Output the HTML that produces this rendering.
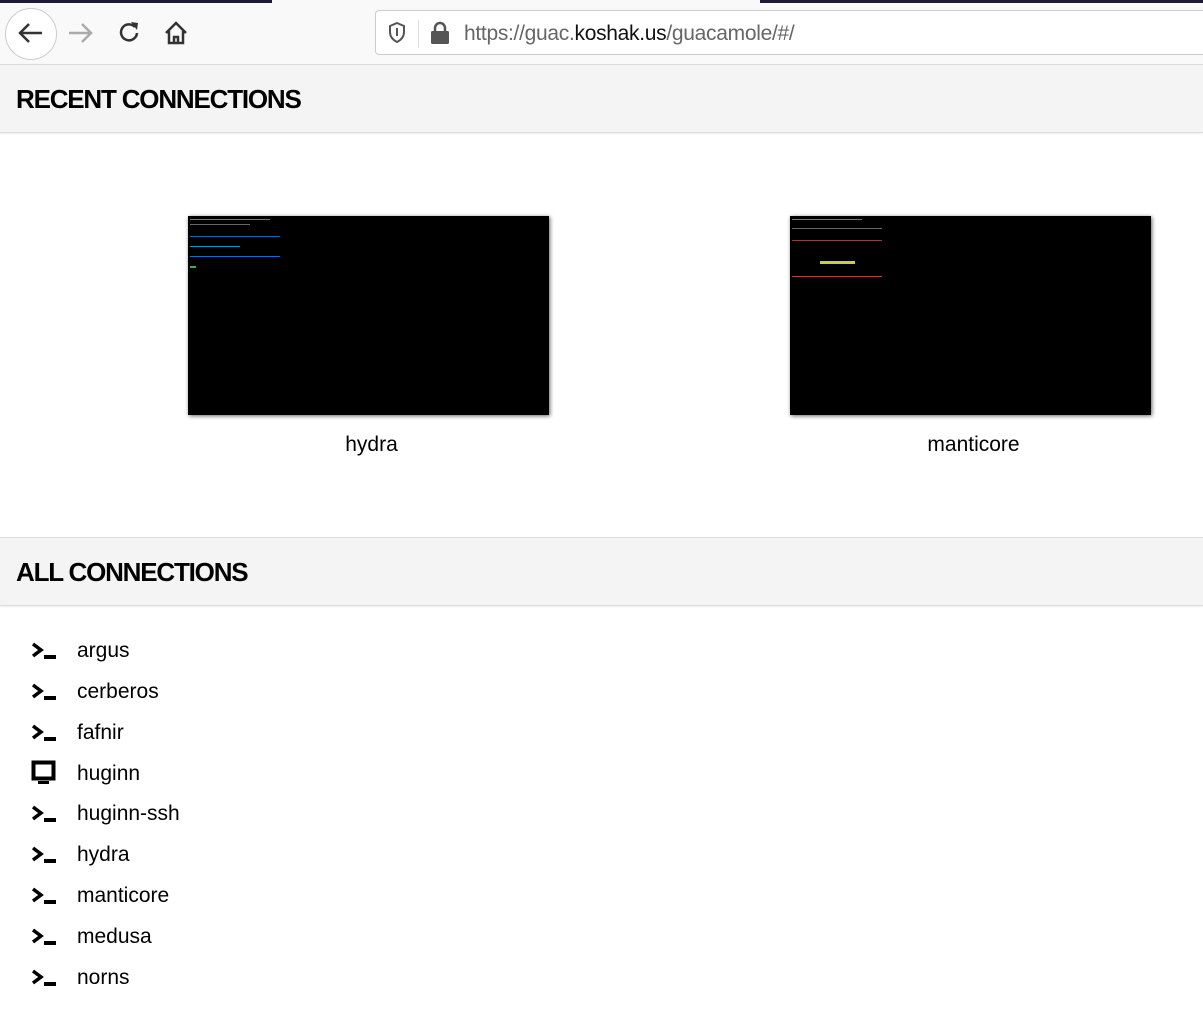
<!DOCTYPE html>
<html><head><meta charset="utf-8"><style>
body{margin:0;width:1203px;height:1031px;overflow:hidden;background:#fff;font-family:"Liberation Sans",sans-serif;position:relative}
.abs{position:absolute}
.hdr{position:absolute;left:0;width:1203px;height:67px;background:#f4f4f4;border-top:1px solid #ddd;border-bottom:1px solid #ddd;box-shadow:0 1px 2px rgba(0,0,0,.08)}
.hdr span{position:absolute;left:16px;top:19px;font-size:26px;font-weight:bold;letter-spacing:-1.2px;color:#000;white-space:nowrap}
.thumb{position:absolute;width:361px;height:199px;background:#000;box-shadow:1px 1px 4px rgba(0,0,0,.6)}
.lbl{position:absolute;font-size:21px;color:#000;text-align:center;width:361px}
.item{position:absolute;left:30px;height:30px;width:300px;font-size:21px;white-space:nowrap}
.item span{position:absolute;left:47px;top:2px}
</style></head><body>
<div class="abs" style="left:0;top:0;width:1203px;height:64px;background:#f9f9fa"></div>
<div class="abs" style="left:0;top:0;width:272px;height:3px;background:#1c1b33"></div>
<div class="abs" style="left:760px;top:0;width:443px;height:3px;background:#1c1b33"></div>
<div class="abs" style="left:5px;top:8px;width:50px;height:50px;border:1px solid #ccc;border-radius:50%;background:#fff"></div>
<svg class="abs" style="left:0;top:0" width="200" height="64">
<path d="M42 33H20M29 24l-9 9 9 9" stroke="#333" stroke-width="2.5" fill="none"/>
<path d="M91 33H69M82 24l9 9-9 9" stroke="#aaa" stroke-width="2.5" fill="none"/>
<path d="M135 27a8 8 0 1 0 2 6" stroke="#333" stroke-width="2.5" fill="none"/><path d="M131 22l7 1-1 7z" fill="#333"/>
<path d="M166 33l10-10 10 10M169 31v12h14V31M174 43v-6h4v6" stroke="#333" stroke-width="2.5" fill="none"/>
</svg>
<div class="abs" style="left:375px;top:10px;width:840px;height:43px;border:1px solid #ccc;border-radius:4px;background:#fff"></div>
<svg class="abs" style="left:380px;top:20px" width="80" height="28">
<path d="M17 3l7 3v6c0 5-3 8-7 10-4-2-7-5-7-10V6z" stroke="#555" stroke-width="2" fill="none"/><rect x="16" y="8" width="2" height="8" fill="#555"/>
<rect x="38" y="0" width="1" height="28" fill="#ddd"/>
<path d="M55 11V8a5 5 0 0 1 10 0v3" stroke="#555" stroke-width="2.5" fill="none"/><rect x="51" y="11" width="18" height="13" rx="1.5" fill="#555"/>
</svg>
<div class="abs" style="left:464px;top:22px;font-size:21px;color:#666;letter-spacing:-0.3px">https://guac.<span style="color:#111">koshak.us</span>/guacamole/#/</div>
<div class="hdr" style="top:64px"><span>RECENT CONNECTIONS</span></div>
<div class="thumb" style="left:188px;top:216px"></div>
<div class="thumb" style="left:790px;top:216px"></div>
<svg class="abs" style="left:188px;top:216px" width="100" height="60"><rect x="2" y="3" width="80" height="1" fill="#777"/><rect x="2" y="8" width="60" height="1" fill="#666"/><rect x="2" y="20" width="90" height="1" fill="#26a"/><rect x="2" y="30" width="50" height="1" fill="#28c"/><rect x="2" y="40" width="90" height="1" fill="#26c"/><rect x="2" y="50" width="6" height="2" fill="#4a4"/></svg>
<svg class="abs" style="left:790px;top:216px" width="100" height="70"><rect x="2" y="3" width="70" height="1" fill="#777"/><rect x="2" y="12" width="90" height="1" fill="#666"/><rect x="2" y="24" width="90" height="1" fill="#844"/><rect x="30" y="45" width="35" height="3" fill="#cc4"/><rect x="2" y="60" width="90" height="1" fill="#a44"/></svg>
<div class="lbl" style="left:191px;top:433px">hydra</div>
<div class="lbl" style="left:793px;top:433px">manticore</div>
<div class="hdr" style="top:537px"><span>ALL CONNECTIONS</span></div>
<div class="item" style="top:637px"><svg class="abs" style="left:0;top:4px" width="28" height="20"><path d="M3 3l8 6-8 6" stroke="#000" stroke-width="3.5" fill="none"/><rect x="14" y="14" width="12" height="4" fill="#000"/></svg><span>argus</span></div>
<div class="item" style="top:678px"><svg class="abs" style="left:0;top:4px" width="28" height="20"><path d="M3 3l8 6-8 6" stroke="#000" stroke-width="3.5" fill="none"/><rect x="14" y="14" width="12" height="4" fill="#000"/></svg><span>cerberos</span></div>
<div class="item" style="top:719px"><svg class="abs" style="left:0;top:4px" width="28" height="20"><path d="M3 3l8 6-8 6" stroke="#000" stroke-width="3.5" fill="none"/><rect x="14" y="14" width="12" height="4" fill="#000"/></svg><span>fafnir</span></div>
<div class="item" style="top:760px"><svg class="abs" style="left:0;top:0" width="28" height="26"><rect x="3.5" y="2.5" width="20" height="16" stroke="#000" stroke-width="4" fill="none"/><rect x="8" y="21" width="11" height="3" fill="#000"/></svg><span>huginn</span></div>
<div class="item" style="top:800px"><svg class="abs" style="left:0;top:4px" width="28" height="20"><path d="M3 3l8 6-8 6" stroke="#000" stroke-width="3.5" fill="none"/><rect x="14" y="14" width="12" height="4" fill="#000"/></svg><span>huginn-ssh</span></div>
<div class="item" style="top:841px"><svg class="abs" style="left:0;top:4px" width="28" height="20"><path d="M3 3l8 6-8 6" stroke="#000" stroke-width="3.5" fill="none"/><rect x="14" y="14" width="12" height="4" fill="#000"/></svg><span>hydra</span></div>
<div class="item" style="top:882px"><svg class="abs" style="left:0;top:4px" width="28" height="20"><path d="M3 3l8 6-8 6" stroke="#000" stroke-width="3.5" fill="none"/><rect x="14" y="14" width="12" height="4" fill="#000"/></svg><span>manticore</span></div>
<div class="item" style="top:923px"><svg class="abs" style="left:0;top:4px" width="28" height="20"><path d="M3 3l8 6-8 6" stroke="#000" stroke-width="3.5" fill="none"/><rect x="14" y="14" width="12" height="4" fill="#000"/></svg><span>medusa</span></div>
<div class="item" style="top:964px"><svg class="abs" style="left:0;top:4px" width="28" height="20"><path d="M3 3l8 6-8 6" stroke="#000" stroke-width="3.5" fill="none"/><rect x="14" y="14" width="12" height="4" fill="#000"/></svg><span>norns</span></div>
</body></html>
